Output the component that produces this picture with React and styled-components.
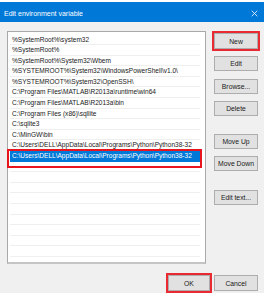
import React from 'react';
import styled, { createGlobalStyle } from 'styled-components';

const GlobalStyle = createGlobalStyle`
  html, body {
    margin: 0;
    padding: 0;
    background: #ffffff;
  }
  body {
    font-family: "Liberation Sans", Arial, sans-serif;
  }
`;

const Window = styled.div`
  position: relative;
  width: 264px;
  height: 300px;
  padding-top: 2px;
  box-sizing: border-box;
  background: #ffffff;
  overflow: hidden;
`;

const TitleBar = styled.div`
  display: flex;
  align-items: center;
  justify-content: space-between;
  height: 20px;
  padding: 3px 6px 0 4px;
  box-sizing: border-box;
  background: #0078d7;
  color: #ffffff;
  font-size: 7px;
`;

const CloseIcon = styled.svg`
  width: 7px;
  height: 7px;
`;

const Body = styled.div`
  background: #f0f0f0;
  height: 271px;
  display: flex;
  flex-direction: column;
`;

const Main = styled.div`
  display: flex;
  padding: 9px 6px 0 7px;
`;

const ListBox = styled.div`
  width: 199px;
  height: 233px;
  box-sizing: border-box;
  border: 1px solid #a9a9a9;
  border-bottom-width: 2px;
  border-bottom-color: #c4c4c4;
  background: #ffffff;
  padding: 2.5px 5px 0 2px;
  overflow: hidden;
`;

const Row = styled.div`
  height: 10.6px;
  line-height: 10.6px;
  box-sizing: border-box;
  padding-left: 2px;
  font-size: 6.55px;
  white-space: nowrap;
  overflow: hidden;
  color: ${p => (p.$selected ? '#ffffff' : '#1a1a1a')};
  background: ${p => (p.$selected ? '#0078d7' : 'transparent')};
  border-bottom: 1px solid ${p => (p.$selected ? '#0078d7' : '#efefef')};
`;

const Buttons = styled.div`
  display: flex;
  flex-direction: column;
  gap: 7.3px;
  margin-left: 8px;
  margin-top: 2px;
`;

const Button = styled.div`
  width: ${p => p.$width || 44}px;
  height: ${p => p.$height || 15}px;
  margin-top: ${p => (p.$spaced ? 11 : 0)}px;
  box-sizing: border-box;
  display: flex;
  align-items: center;
  justify-content: center;
  background: #e1e1e1;
  border: 1px solid #adadad;
  font-size: 6.8px;
  color: #1a1a1a;
  outline: ${p => (p.$marked ? '2px solid #ea2a32' : 'none')};
`;

const Footer = styled.div`
  display: flex;
  justify-content: flex-end;
  gap: 4px;
  padding: 11px 6px 0 0;
`;

const Marker = styled.div`
  position: absolute;
  left: 7px;
  top: 149px;
  width: 195px;
  height: 19px;
  box-sizing: border-box;
  border: 2px solid #e8141e;
  pointer-events: none;
`;

const paths = [
  '%SystemRoot%\\system32',
  '%SystemRoot%',
  '%SystemRoot%\\System32\\Wbem',
  '%SYSTEMROOT%\\System32\\WindowsPowerShell\\v1.0\\',
  '%SYSTEMROOT%\\System32\\OpenSSH\\',
  'C:\\Program Files\\MATLAB\\R2013a\\runtime\\win64',
  'C:\\Program Files\\MATLAB\\R2013a\\bin',
  'C:\\Program Files (x86)\\sqllite',
  'C:\\sqlite3',
  'C:\\MinGW\\bin',
  'C:\\Users\\DELL\\AppData\\Local\\Programs\\Python\\Python38-32',
  'C:\\Users\\DELL\\AppData\\Local\\Programs\\Python\\Python38-32',
];

const rows = [...paths, ...Array(10).fill('')];

const App = () => (
  <>
    <GlobalStyle />
    <Window>
      <TitleBar>
        <span>Edit environment variable</span>
        <CloseIcon viewBox="0 0 10 10">
          <path d="M1 1 L9 9 M9 1 L1 9" stroke="#ffffff" strokeWidth="1.1" />
        </CloseIcon>
      </TitleBar>
      <Body>
        <Main>
          <ListBox>
            {rows.map((text, i) => (
              <Row key={i} $selected={i === 11}>{text}</Row>
            ))}
          </ListBox>
          <Buttons>
            <Button $marked $height={16}>New</Button>
            <Button>Edit</Button>
            <Button>Browse...</Button>
            <Button>Delete</Button>
            <Button $spaced>Move Up</Button>
            <Button>Move Down</Button>
            <Button $spaced>Edit text...</Button>
          </Buttons>
        </Main>
        <Footer>
          <Button $marked $width={42} $height={16}>OK</Button>
          <Button $height={16}>Cancel</Button>
        </Footer>
      </Body>
      <Marker />
    </Window>
  </>
);

export default App;
